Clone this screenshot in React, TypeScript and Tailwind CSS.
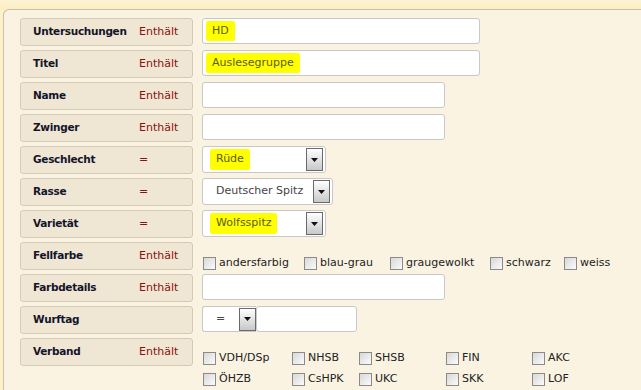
import React from "react";

type Row = {
  label: string;
  op: string;
  kind: "text" | "select" | "checks" | "date" | "verband";
  value?: string;
  mark?: boolean;
  width?: string;
};

const rows: Row[] = [
  { label: "Untersuchungen", op: "Enthält", kind: "text", value: "HD", mark: true, width: "w-[278px]" },
  { label: "Titel", op: "Enthält", kind: "text", value: "Auslesegruppe", mark: true, width: "w-[278px]" },
  { label: "Name", op: "Enthält", kind: "text", width: "w-[243px]" },
  { label: "Zwinger", op: "Enthält", kind: "text", width: "w-[243px]" },
  { label: "Geschlecht", op: "=", kind: "select", value: "Rüde", mark: true, width: "w-[124px]" },
  { label: "Rasse", op: "=", kind: "select", value: "Deutscher Spitz", width: "w-[131px]" },
  { label: "Varietät", op: "=", kind: "select", value: "Wolfsspitz", mark: true, width: "w-[124px]" },
  { label: "Fellfarbe", op: "Enthält", kind: "checks" },
  { label: "Farbdetails", op: "Enthält", kind: "text", width: "w-[243px]" },
  { label: "Wurftag", op: "", kind: "date" },
  { label: "Verband", op: "Enthält", kind: "verband" },
];

const colors = ["andersfarbig", "blau-grau", "graugewolkt", "schwarz", "weiss"];
const verband = ["VDH/DSp", "NHSB", "SHSB", "FIN", "AKC", "ÖHZB", "CsHPK", "UKC", "SKK", "LOF"];

function Box() {
  return (
    <span className="inline-block h-[13px] w-[13px] shrink-0 border border-[#8a8a8a] bg-gradient-to-br from-[#d8d8d8] to-[#fbfbfb]" />
  );
}

function Arrow() {
  return (
    <span className="flex h-[23px] w-[17px] shrink-0 items-center justify-center border border-[#6a6a6a] bg-gradient-to-b from-[#ffffff] to-[#c8c8c8]">
      <svg width="7" height="4" viewBox="0 0 7 4">
        <path d="M0 0h7L3.5 4z" fill="#111" />
      </svg>
    </span>
  );
}

function Value({ text, mark }: { text: string; mark?: boolean }) {
  if (mark)
    return (
      <span className="rounded-[2px] bg-[#ffff00] px-[6px] py-[2px] text-[#5b5b16]">{text}</span>
    );
  return <span className="text-[#444]">{text}</span>;
}

function Field({ row }: { row: Row }) {
  if (row.kind === "text")
    return (
      <div
        className={`flex h-[26px] items-center rounded-[3px] border border-[#c8c8c8] bg-white pl-[3px] ${row.width}`}
      >
        {row.value && <Value text={row.value} mark={row.mark} />}
      </div>
    );
  if (row.kind === "select")
    return (
      <div
        className={`flex h-[27px] items-center justify-between rounded-[3px] border border-[#c8c8c8] bg-white pr-[2px] ${row.mark ? "pl-[7px]" : "pl-[13px]"} ${row.width}`}
      >
        <Value text={row.value ?? ""} mark={row.mark} />
        <Arrow />
      </div>
    );
  if (row.kind === "date")
    return (
      <div className="flex h-[26px] w-[155px] items-center">
        <div className="flex h-[26px] w-[54px] items-center justify-between rounded-l-[3px] border border-r-0 border-[#c8c8c8] bg-white pl-[13px]">
          <span className="text-[#444]">=</span>
          <Arrow />
        </div>
        <div className="h-[26px] flex-1 rounded-[3px] border border-[#c8c8c8] bg-white" />
      </div>
    );
  if (row.kind === "checks")
    return (
      <div className="grid grid-cols-[101px_86px_100px_74px_70px] pt-[13px] pl-[1px]">
        {colors.map((c) => (
          <label key={c} className="flex items-center gap-[3px] leading-[16px] text-[#222]">
            <Box />
            {c}
          </label>
        ))}
      </div>
    );
  return (
    <div className="grid grid-cols-[89px_67px_87px_86px_80px] gap-y-[5px] pt-[12px] pl-[1px]">
      {verband.map((v) => (
        <label key={v} className="flex items-center gap-[3px] leading-[16px] text-[#222]">
          <Box />
          {v}
        </label>
      ))}
    </div>
  );
}

export default function App() {
  return (
    <div className="h-[390px] w-[641px] overflow-hidden bg-[#fdf1c9] font-['DejaVu_Sans',Verdana,sans-serif] text-[11px]">
      <div className="h-[9px] bg-gradient-to-b from-[#fdf3d2] to-[#fceec2]" />
      <div className="ml-[3px] h-[400px] rounded-tl-[6px] border-l border-t border-[#c9c1a8] bg-[#faf3e2] pl-[16px] pt-[8px]">
        <div className="flex flex-col gap-[4px]">
          {rows.map((r) => (
            <div key={r.label} className="flex h-[28px] items-start gap-[9px]">
              <div className="flex h-[28px] w-[173px] shrink-0 items-center rounded-[3px] border border-[#d6ccb6] bg-[#efe6d3] pl-[12px]">
                <span className="w-[106px] text-[10.5px] font-bold tracking-[-0.3px] text-[#14142a]">
                  {r.label}
                </span>
                <span className="text-[#8c1010]">{r.op}</span>
              </div>
              <Field row={r} />
            </div>
          ))}
        </div>
      </div>
    </div>
  );
}
